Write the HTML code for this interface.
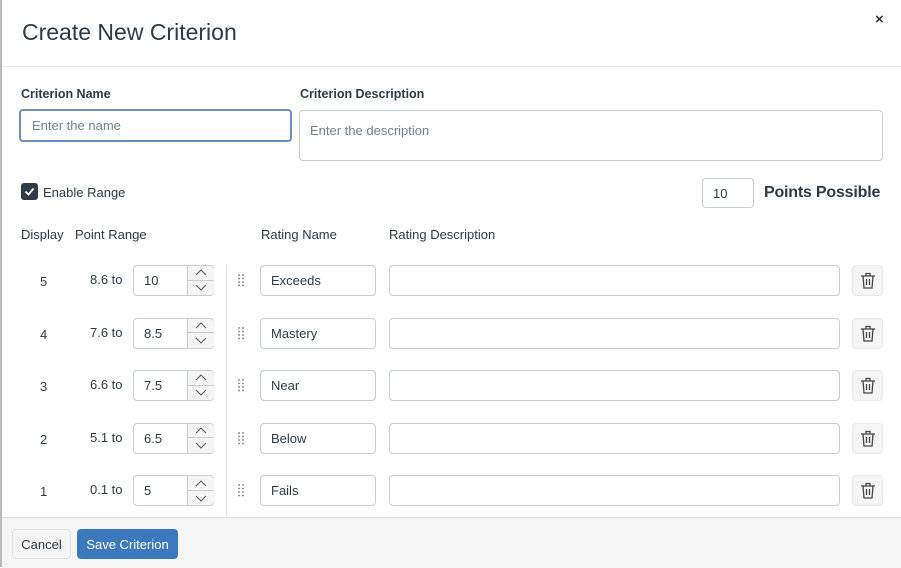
<!DOCTYPE html><html><head><style>
body{margin:0;width:901px;height:567px;position:relative;background:#fff;font-family:"Liberation Sans",sans-serif;color:#2d3b45;overflow:hidden}
.a{position:absolute}
.inp{position:absolute;border:1px solid #c7cdd1;border-radius:4px;background:#fff;box-sizing:border-box;font-size:13px;color:#2d3b45;padding-left:10px;display:flex;align-items:center}
.ph{color:#73818c}
.lbl{position:absolute;font-size:12.5px;font-weight:bold}
.sm{position:absolute;font-size:13px}
.spin{position:absolute;left:53px;top:0;width:26px;height:100%;border-left:1px solid #c7cdd1;background:#f5f5f5;border-radius:0 4px 4px 0}
.spin div{height:50%;box-sizing:border-box;display:flex;align-items:center;justify-content:center}
.trash{position:absolute;left:852px;width:31px;height:31px;background:#f5f5f5;border:1px solid #e8eaec;border-radius:4px;box-sizing:border-box;display:flex;align-items:center;justify-content:center}
</style></head><body>
<div class="a" style="left:0;top:0;width:2px;height:567px;background:#bbb"></div>
<div class="a" style="left:22px;top:19px;font-size:23px;color:#2d3b45">Create New Criterion</div>
<div class="a" style="left:875px;top:11px;font-size:15px;font-weight:bold">×</div>
<div class="a" style="left:2px;top:66px;width:899px;height:1px;background:#e8eaec"></div>
<div class="lbl" style="left:21px;top:87px">Criterion Name</div>
<div class="lbl" style="left:300px;top:87px">Criterion Description</div>
<div class="inp ph" style="left:19px;top:109px;width:273px;height:33px;border:2px solid #6b8fc4;padding-left:11px">Enter the name</div>
<div class="inp ph" style="left:299px;top:110px;width:584px;height:51px;align-items:flex-start;padding-top:12px">Enter the description</div>
<div class="a" style="left:21px;top:183px;width:17px;height:17px;background:#2d3b45;border-radius:3px"><svg width="17" height="17"><path d="M4.5 8.5l3 3 5-6" stroke="#fff" stroke-width="1.8" fill="none"/></svg></div>
<div class="sm" style="left:43px;top:185px">Enable Range</div>
<div class="inp" style="left:702px;top:178px;width:52px;height:30px">10</div>
<div class="a" style="left:764px;top:184px;font-size:16px;font-weight:bold;letter-spacing:-0.2px">Points Possible</div>
<div class="sm" style="left:21px;top:227px">Display</div>
<div class="sm" style="left:75px;top:227px">Point Range</div>
<div class="sm" style="left:261px;top:227px">Rating Name</div>
<div class="sm" style="left:389px;top:227px">Rating Description</div>
<div class="a" style="left:226px;top:265px;width:1px;height:252px;background:#e0e3e5"></div>

<div id="rows"></div>
<script>
var d=[["5","8.6","10","Exceeds"],["4","7.6","8.5","Mastery"],["3","6.6","7.5","Near"],["2","5.1","6.5","Below"],["1","0.1","5","Fails"]];
var h="";
d.forEach(function(r,i){var t=265+i*52.6;
h+='<div class="sm" style="left:40px;top:'+(t+9)+'px">'+r[0]+'</div>';
h+='<div class="sm" style="left:90px;top:'+(t+7)+'px">'+r[1]+' to</div>';
h+='<div class="inp" style="left:133px;top:'+t+'px;width:81px;height:31px">'+r[2]+'<div class="spin"><div style="border-bottom:1px solid #c7cdd1"><svg width="12" height="7"><path d="M1 6l5-5 5 5" stroke="#555" fill="none"/></svg></div><div><svg width="12" height="7"><path d="M1 1l5 5 5-5" stroke="#555" fill="none"/></svg></div></div></div>';
h+='<div class="a" style="left:238px;top:'+(t+9)+'px"><svg width="6" height="13" fill="#777"><circle cx="1" cy="1" r=".9"/><circle cx="5" cy="1" r=".9"/><circle cx="1" cy="4.5" r=".9"/><circle cx="5" cy="4.5" r=".9"/><circle cx="1" cy="8" r=".9"/><circle cx="5" cy="8" r=".9"/><circle cx="1" cy="11.5" r=".9"/><circle cx="5" cy="11.5" r=".9"/></svg></div>';
h+='<div class="inp" style="left:260px;top:'+t+'px;width:116px;height:31px">'+r[3]+'</div>';
h+='<div class="inp" style="left:389px;top:'+t+'px;width:451px;height:31px"></div>';
h+='<div class="trash" style="top:'+t+'px"><svg width="16" height="17" fill="none" stroke="#444" stroke-width="1.3"><path d="M1 4h14M6 4V1.5h4V4M3 4l1 12h8l1-12M6.5 7v6M9.5 7v6"/></svg></div>';
});
document.getElementById("rows").innerHTML=h;
</script>
<div class="a" style="left:2px;top:517px;width:899px;height:50px;background:#f5f5f5;border-top:1px solid #e0e3e5"></div>
<div class="a" style="left:12px;top:529px;width:59px;height:30px;border:1px solid #e0e3e5;border-radius:4px;box-sizing:border-box;background:#f5f5f5;font-size:13px;display:flex;align-items:center;justify-content:center">Cancel</div>
<div class="a" style="left:77px;top:529px;width:101px;height:30px;border-radius:4px;background:#3c78bd;color:#fff;font-size:13px;display:flex;align-items:center;justify-content:center">Save Criterion</div>
</body></html>
